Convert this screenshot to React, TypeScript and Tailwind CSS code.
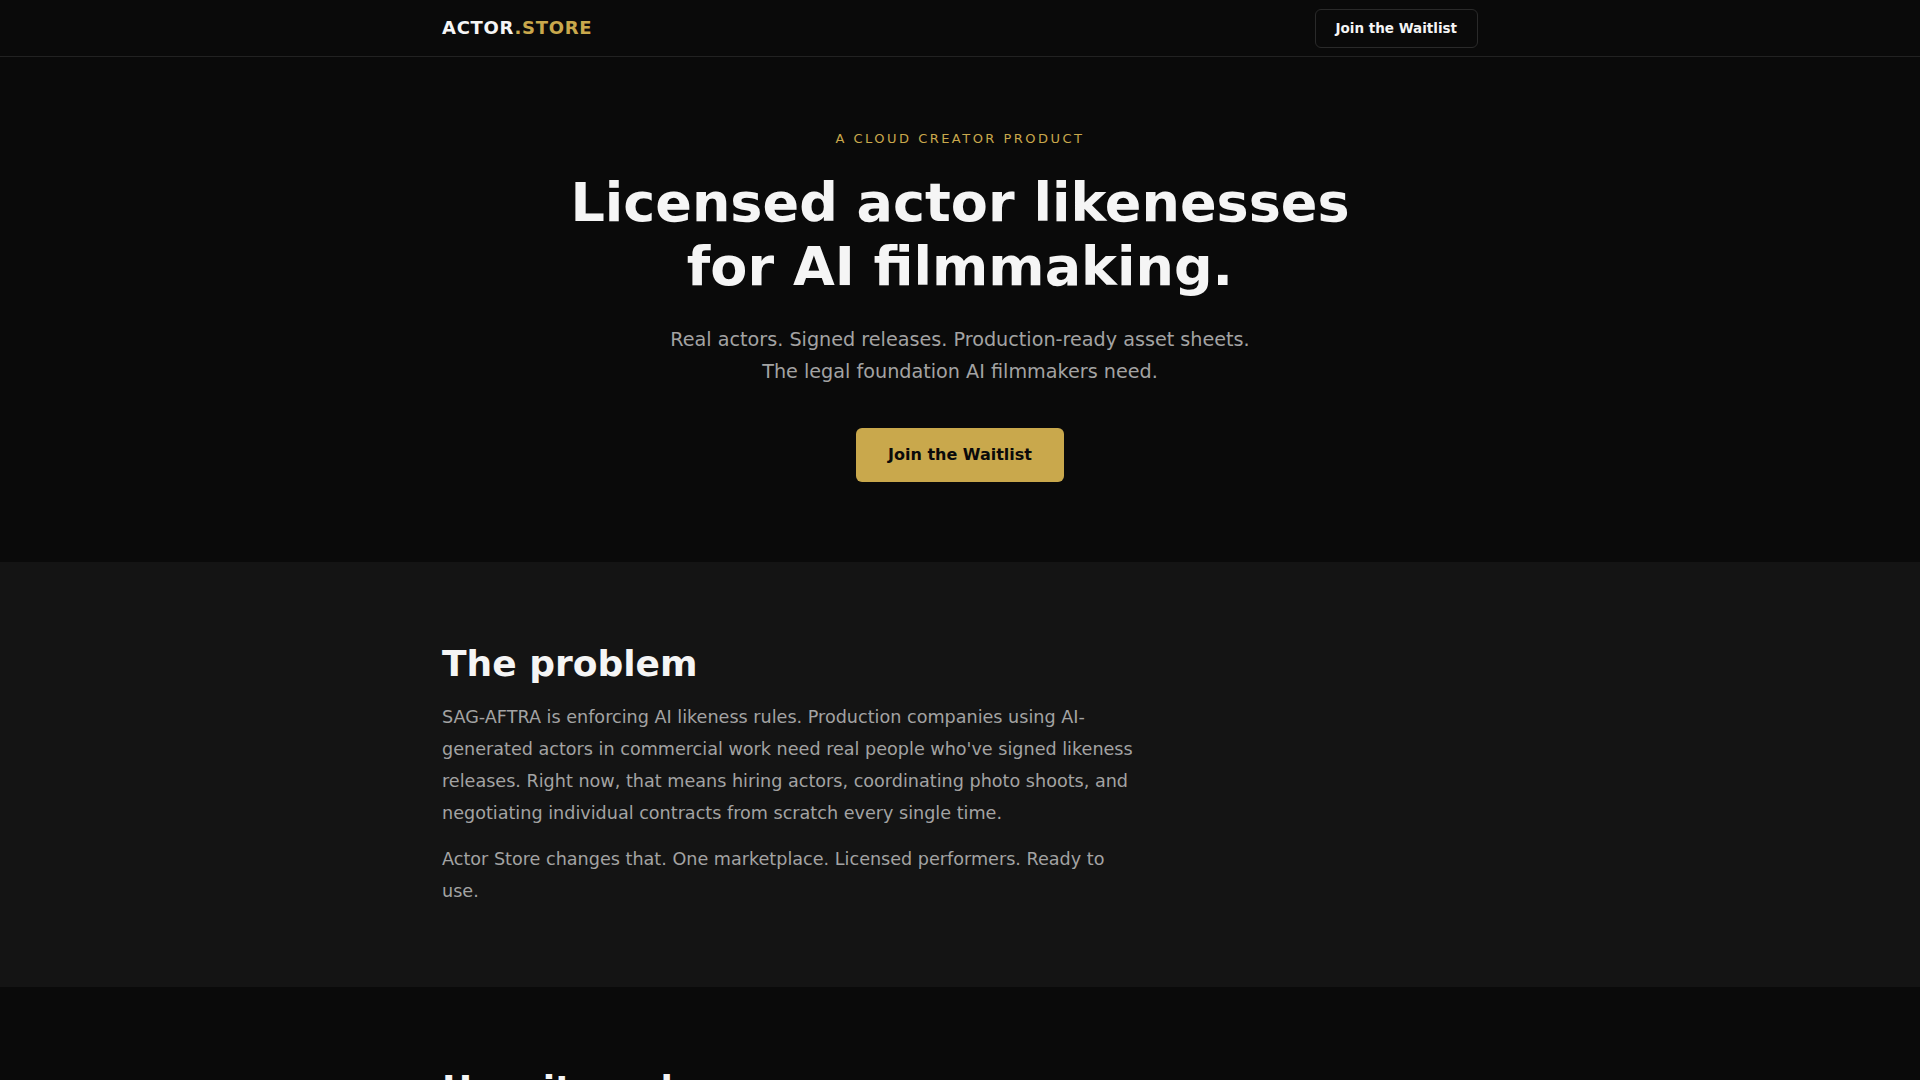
import React from "react";

export default function App() {
  return (
    <div className="min-h-screen bg-[#0a0a0a] text-[#f5f5f5] font-['DejaVu_Sans',sans-serif]">
      <nav className="border-b border-[#222222]">
        <div className="mx-auto max-w-[1100px] px-8 h-14 flex items-center justify-between">
          <div className="text-lg font-bold tracking-[0.04em]">
            <span className="text-[#f5f5f5]">ACTOR</span>
            <span className="text-[#c9a84c]">.STORE</span>
          </div>
          <button className="border border-[#2a2a2a] rounded-md px-5 h-[39px] text-[13.5px] font-bold text-[#f5f5f5]">
            Join the Waitlist
          </button>
        </div>
      </nav>

      <section className="pt-[72px] pb-20 text-center">
        <div className="mx-auto max-w-[1100px] px-8 flex flex-col items-center">
          <p className="text-[13px] tracking-[0.19em] text-[#c9a84c] uppercase leading-5">
            A Cloud Creator Product
          </p>
          <h1 className="mt-[22px] text-[54px] font-bold leading-[64px]">
            Licensed actor likenesses
            <br />
            for AI filmmaking.
          </h1>
          <p className="mt-[25px] text-[19.2px] leading-8 text-[#a3a3a3]">
            Real actors. Signed releases. Production-ready asset sheets.
            <br />
            The legal foundation AI filmmakers need.
          </p>
          <button className="mt-10 bg-[#c9a84c] text-[#0a0a0a] rounded-md w-[208px] h-[54px] text-base font-bold">
            Join the Waitlist
          </button>
        </div>
      </section>

      <section className="bg-[#141414] py-20">
        <div className="mx-auto max-w-[1100px] px-8">
          <h2 className="text-4xl font-bold leading-[1.2]">The problem</h2>
          <div className="mt-4 max-w-[700px] text-[17.6px] leading-8 text-[#a3a3a3]">
            <p className="mb-[14px]">
              SAG-AFTRA is enforcing AI likeness rules. Production companies using AI-generated actors in commercial work need real people who've signed likeness releases. Right now, that means hiring actors, coordinating photo shoots, and negotiating individual contracts from scratch every single time.
            </p>
            <p>
              Actor Store changes that. One marketplace. Licensed performers. Ready to use.
            </p>
          </div>
        </div>
      </section>

      <section className="py-20">
        <div className="mx-auto max-w-[1100px] px-8">
          <h2 className="text-4xl font-bold leading-[1.2]">How it works</h2>
          <div className="h-96" />
        </div>
      </section>
    </div>
  );
}
